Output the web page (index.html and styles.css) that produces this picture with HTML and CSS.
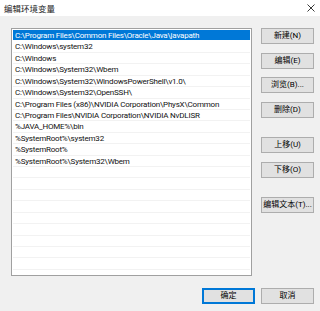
FILE: index.html
```html
<!DOCTYPE html>
<html lang="zh-CN">
<head>
    <meta charset="UTF-8">
    <title>编辑环境变量</title>
    <link rel="stylesheet" href="styles.css">
</head>
<body>
    <div class="dialog">
        <div class="title-bar">
            <span class="title">编辑环境变量</span>
            <svg class="close" width="8" height="8" viewBox="0 0 8 8">
                <path d="M0.5 0.5 L7.5 7.5 M7.5 0.5 L0.5 7.5" stroke="#222" stroke-width="0.9" fill="none"/>
            </svg>
        </div>
        <div class="dialog-body">
            <div class="path-list" id="pathList"></div>
            <div class="side-buttons">
                <button class="btn">新建(N)</button>
                <button class="btn">编辑(E)</button>
                <button class="btn">浏览(B)...</button>
                <button class="btn">删除(D)</button>
                <button class="btn group-start">上移(U)</button>
                <button class="btn">下移(O)</button>
                <button class="btn group-start">编辑文本(T)...</button>
            </div>
        </div>
        <div class="dialog-footer">
            <button class="btn default">确定</button>
            <button class="btn">取消</button>
        </div>
    </div>

    <script>
        const paths = [
            'C:\\Program Files\\Common Files\\Oracle\\Java\\javapath',
            'C:\\Windows\\system32',
            'C:\\Windows',
            'C:\\Windows\\System32\\Wbem',
            'C:\\Windows\\System32\\WindowsPowerShell\\v1.0\\',
            'C:\\Windows\\System32\\OpenSSH\\',
            'C:\\Program Files (x86)\\NVIDIA Corporation\\PhysX\\Common',
            'C:\\Program Files\\NVIDIA Corporation\\NVIDIA NvDLISR',
            '%JAVA_HOME%\\bin',
            '%SystemRoot%\\system32',
            '%SystemRoot%',
            '%SystemRoot%\\System32\\Wbem'
        ];
        const pathList = document.getElementById('pathList');
        for (let i = 0; i < 21; i++) {
            const row = document.createElement('div');
            row.className = 'row' + (i === 0 ? ' selected' : '');
            row.textContent = paths[i] || '';
            pathList.appendChild(row);
        }
    </script>
</body>
</html>
```
FILE: styles.css
```css
body {
    margin: 0;
    padding: 0;
    background: #f0f0f0;
    font-family: Roboto, "Noto Sans CJK SC", sans-serif;
    font-size: 8px;
    color: #000;
}
.dialog {
    width: 320px;
    height: 311px;
    overflow: hidden;
}
.title-bar {
    height: 16px;
    background: #ffffff;
    display: flex;
    align-items: center;
    justify-content: space-between;
    padding: 0 5px 0 4px;
    box-sizing: border-box;
}
.title {
    font-size: 8.5px;
    font-family: "Noto Sans CJK SC", sans-serif;
    color: #222;
}
.dialog-body {
    display: flex;
    padding: 12px 6px 0 11px;
}
.path-list {
    width: 241px;
    height: 248px;
    box-sizing: border-box;
    border: 1px solid #a0a0a0;
    background: #ffffff;
    padding: 1px 1px 0 1px;
    overflow: hidden;
}
.row {
    height: 11.43px;
    line-height: 11px;
    padding-left: 2px;
    white-space: nowrap;
    letter-spacing: -0.2px;
    color: #111;
    background: linear-gradient(to top, #f2f2f2 1px, transparent 1px);
}
.row.selected {
    background: linear-gradient(to top, #ffffff 1px, #0078d7 1px);
    color: #ffffff;
}
.side-buttons {
    display: flex;
    flex-direction: column;
    gap: 8.5px;
    margin-left: 9px;
}
.btn {
    width: 53px;
    height: 16px;
    padding: 0;
    background: #e1e1e1;
    border: 1px solid #adadad;
    font-family: Roboto, "Noto Sans CJK SC", sans-serif;
    font-size: 8px;
    color: #000;
    line-height: 14px;
}
.btn.group-start {
    margin-top: 11px;
}
.dialog-footer {
    display: flex;
    justify-content: flex-end;
    gap: 6px;
    padding: 12px 6px 0 0;
}
.btn.default {
    border-color: #0078d7;
    box-shadow: inset 0 0 0 1px #0078d7;
}
```
